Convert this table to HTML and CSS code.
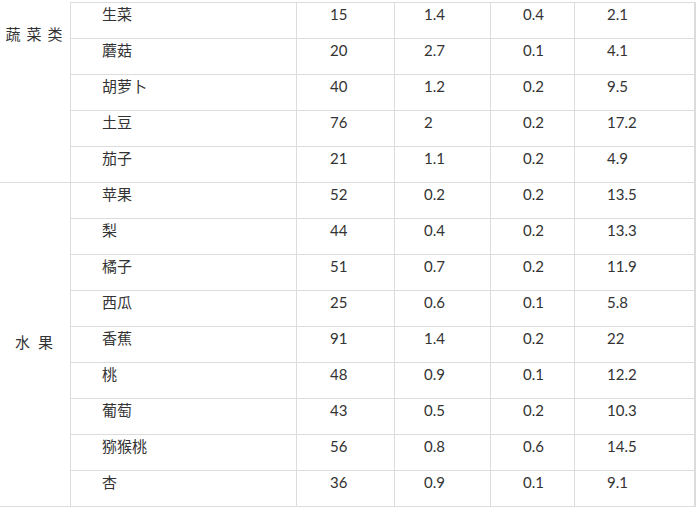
FILE: index.html
```html
<!DOCTYPE html>
<html lang="zh">
<head>
<meta charset="utf-8">
<link rel="stylesheet" href="styles.css">
</head>
<body>
<table class="food">
  <colgroup>
    <col class="c-cat"><col class="c-name"><col class="c-a"><col class="c-b"><col class="c-c"><col class="c-d">
  </colgroup>
  <tbody>
    <tr class="first">
      <td class="cat cat-veg" rowspan="5">蔬菜类</td>
      <td class="name">生菜</td><td class="n1">15</td><td class="n2">1.4</td><td class="n3">0.4</td><td class="n4">2.1</td>
    </tr>
    <tr><td class="name">蘑菇</td><td class="n1">20</td><td class="n2">2.7</td><td class="n3">0.1</td><td class="n4">4.1</td></tr>
    <tr><td class="name">胡萝卜</td><td class="n1">40</td><td class="n2">1.2</td><td class="n3">0.2</td><td class="n4">9.5</td></tr>
    <tr><td class="name">土豆</td><td class="n1">76</td><td class="n2">2</td><td class="n3">0.2</td><td class="n4">17.2</td></tr>
    <tr><td class="name">茄子</td><td class="n1">21</td><td class="n2">1.1</td><td class="n3">0.2</td><td class="n4">4.9</td></tr>
    <tr>
      <td class="cat cat-fruit" rowspan="9">水果</td>
      <td class="name">苹果</td><td class="n1">52</td><td class="n2">0.2</td><td class="n3">0.2</td><td class="n4">13.5</td>
    </tr>
    <tr><td class="name">梨</td><td class="n1">44</td><td class="n2">0.4</td><td class="n3">0.2</td><td class="n4">13.3</td></tr>
    <tr><td class="name">橘子</td><td class="n1">51</td><td class="n2">0.7</td><td class="n3">0.2</td><td class="n4">11.9</td></tr>
    <tr><td class="name">西瓜</td><td class="n1">25</td><td class="n2">0.6</td><td class="n3">0.1</td><td class="n4">5.8</td></tr>
    <tr><td class="name">香蕉</td><td class="n1">91</td><td class="n2">1.4</td><td class="n3">0.2</td><td class="n4">22</td></tr>
    <tr><td class="name">桃</td><td class="n1">48</td><td class="n2">0.9</td><td class="n3">0.1</td><td class="n4">12.2</td></tr>
    <tr><td class="name">葡萄</td><td class="n1">43</td><td class="n2">0.5</td><td class="n3">0.2</td><td class="n4">10.3</td></tr>
    <tr><td class="name">猕猴桃</td><td class="n1">56</td><td class="n2">0.8</td><td class="n3">0.6</td><td class="n4">14.5</td></tr>
    <tr><td class="name">杏</td><td class="n1">36</td><td class="n2">0.9</td><td class="n3">0.1</td><td class="n4">9.1</td></tr>
  </tbody>
</table>
</body>
</html>
```

FILE: styles.css
```css
html, body {
  margin: 0;
  padding: 0;
  background: #ffffff;
}

body {
  font-family: "Lato", "Noto Sans CJK SC", sans-serif;
  color: #333333;
  font-size: 15px;
}

.food {
  margin-top: 2px;
  border-collapse: separate;
  border-spacing: 0;
  table-layout: fixed;
  width: 696px;
}

.c-cat { width: 71px; }
.c-name { width: 226px; }
.c-a { width: 98px; }
.c-b { width: 96px; }
.c-c { width: 84px; }
.c-d { width: 121px; }

.food td {
  box-sizing: border-box;
  height: 36px;
  padding: 1px 0 14px 32px;
  line-height: 20px;
  vertical-align: top;
  border-right: 1px solid #dcdcdc;
  border-bottom: 1px solid #dcdcdc;
  white-space: nowrap;
}

.food tr.first td {
  height: 37px;
  border-top: 1px solid #dcdcdc;
}

.food tr.first td.cat {
  border-top: 0;
}

.food td.name { padding-left: 31px; }
.food td.n1 { padding-left: 33px; }
.food td.n2 { padding-left: 29px; }
.food td.n3 { padding-left: 32px; }
.food td.n4 { padding-left: 32px; border-right-width: 2px; }

.food td.cat {
  padding: 0;
  text-align: center;
  font-size: 15px;
  letter-spacing: 6px;
  text-indent: 4px;
}

.food td.cat-veg {
  vertical-align: top;
  padding-top: 22px;
}

.food td.cat-fruit {
  vertical-align: middle;
  padding-bottom: 6px;
  letter-spacing: 8px;
  text-indent: 6px;
}
```
